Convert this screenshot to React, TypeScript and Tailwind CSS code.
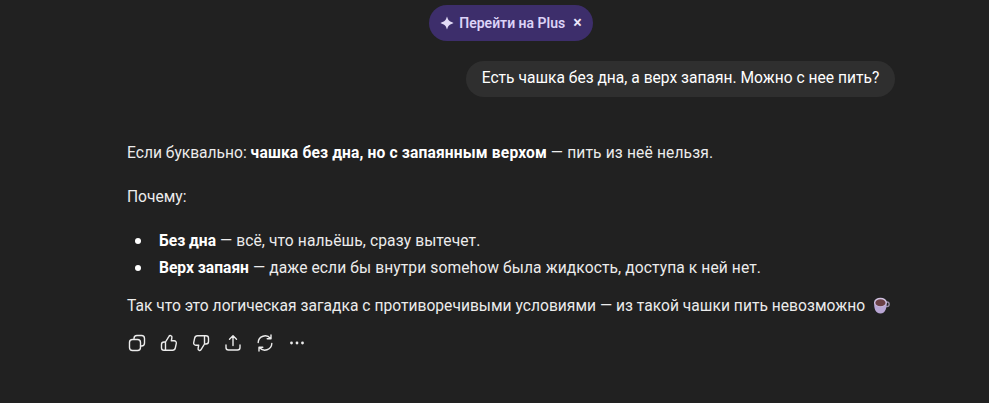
const font = "font-['Roboto','Noto_Sans',sans-serif]"

function Sparkle() {
  return (
    <svg width="14" height="14" viewBox="0 0 14 14" fill="#e4dcf7">
      <path d="M7 .5c.5 1.500 1 3 2 4s2.500 1.500 4.500 2.500c-2 1-3.500 1.500-4.500 2.500s-1.500 2.500-2 4c-.5-1.500-1-3-2-4S2.500 8 .5 7c2-1 3.500-1.500 4.500-2.500S6.500 2 7 .5z" />
    </svg>
  )
}

function ActionIcon({ children }: { children: React.ReactNode }) {
  return (
    <svg
      width="20"
      height="20"
      viewBox="0 0 20 20"
      fill="none"
      stroke="#ececec"
      strokeWidth="1.4"
      strokeLinecap="round"
      strokeLinejoin="round"
    >
      {children}
    </svg>
  )
}

function Actions() {
  return (
    <div className="mt-[13px] flex items-center gap-3">
      <ActionIcon>
        <rect x="2.500" y="6.500" width="11" height="11" rx="3" />
        <path d="M7 6.300V5.500a3 3 0 0 1 3-3h4.500a3 3 0 0 1 3 3V10a3 3 0 0 1-3 3h-1" />
      </ActionIcon>
      <ActionIcon>
        <path d="M6.500 9 9.800 3.600c.4-.8 1.200-1.200 2-.9.900.3 1.300 1.100 1.100 2L12.300 7.800h2.900c1.400 0 2.400 1.300 2.100 2.600l-1 4.600c-.3 1.300-1.400 2.200-2.700 2.200H5c-1.400 0-2.500-1.100-2.500-2.500v-3.200C2.500 10.100 3.600 9 5 9h1.500v8" />
      </ActionIcon>
      <ActionIcon>
        <path d="M13.500 11 10.200 16.400c-.4.800-1.200 1.200-2 .9-.9-.3-1.300-1.100-1.100-2L7.700 12.200H4.800c-1.400 0-2.400-1.300-2.100-2.600l1-4.600C4 3.700 5.100 2.800 6.400 2.800H15c1.400 0 2.500 1.100 2.500 2.500v3.200c0 1.400-1.100 2.500-2.500 2.500h-1.500V3" />
      </ActionIcon>
      <ActionIcon>
        <path d="M10 12.500V3M6.500 6.200 10 2.700l3.500 3.500" />
        <path d="M3 12v2.500a2.500 2.500 0 0 0 2.500 2.500h9a2.500 2.500 0 0 0 2.500-2.500V12" />
      </ActionIcon>
      <ActionIcon>
        <path d="M3.200 9.500A6.900 6.900 0 0 1 15.500 5.500M16 2v3.800h-3.800" />
        <path d="M16.800 10.500A6.900 6.900 0 0 1 4.500 14.500M4 18v-3.800h3.800" />
      </ActionIcon>
      <svg width="20" height="20" viewBox="0 0 20 20" fill="#ececec">
        <circle cx="4.500" cy="10" r="1.400" />
        <circle cx="10" cy="10" r="1.400" />
        <circle cx="15.500" cy="10" r="1.400" />
      </svg>
    </div>
  )
}

function Teacup() {
  return (
    <svg width="17" height="17" viewBox="0 0 16 16" className="ml-[8px] inline-block align-[-3px]">
      <path d="M11.500 4.500h1.500a1.800 1.800 0 0 1 0 4.500h-2" fill="none" stroke="#9c8fa8" strokeWidth="1.200" />
      <path d="M1 5c0 6 1 10.500 6 10.500S13 10 13 5z" fill="#b9a6d4" />
      <ellipse cx="7" cy="5" rx="6" ry="4.300" fill="#cfc0e0" />
      <ellipse cx="7" cy="5.400" rx="4.800" ry="3.400" fill="#6b4046" />
    </svg>
  )
}

const bullet =
  "relative h-[27px] before:absolute before:left-[-24px] before:top-[10px] before:size-[6px] before:rounded-full before:bg-white"

export default function App() {
  return (
    <div className={`${font} h-[403px] w-[989px] overflow-hidden bg-[#212121] text-[15.6px] text-[#ececec]`}>
      <div className="flex justify-center pt-[5px] pl-[33px]">
        <div className="flex h-9 w-[164px] items-center justify-center gap-[5px] rounded-full bg-[#3d2e6b] text-[14px] font-semibold text-[#dcd3f7]">
          <Sparkle />
          <span>Перейти на Plus</span>
          <span className="ml-[3px] text-[16px] leading-none text-[#ece8fa]">×</span>
        </div>
      </div>

      <div className="mt-5 flex justify-end pr-[94px]">
        <div className="flex h-9 w-[429px] items-center justify-center rounded-[18px] bg-[#2f2f2f] text-white">
          Есть чашка без дна, а верх запаян. Можно с нее пить?
        </div>
      </div>

      <div className="mt-[43px] pl-[127px] leading-[27px]">
        <p>
          Если буквально: <strong className="font-bold tracking-[0.15px] text-white">чашка без дна, но с запаянным верхом</strong> <span className="tracking-[0.14px]">— пить из неё нельзя.</span>
        </p>
        <p className="mt-[17px]">Почему:</p>
        <ul className="mt-[17px] pl-8 tracking-[0.1px]">
          <li className={bullet}>
            <strong className="font-bold tracking-normal text-white">Без дна</strong> — всё, что нальёшь, сразу вытечет.
          </li>
          <li className={bullet}>
            <strong className="font-bold tracking-normal text-white">Верх запаян</strong> — даже если бы внутри somehow была жидкость, доступа к ней нет.
          </li>
        </ul>
        <p className="mt-[11px] tracking-[0.02px]">
          Так что это логическая загадка с противоречивыми условиями — из такой чашки пить невозможно
          <Teacup />
        </p>
        <Actions />
      </div>
    </div>
  )
}
